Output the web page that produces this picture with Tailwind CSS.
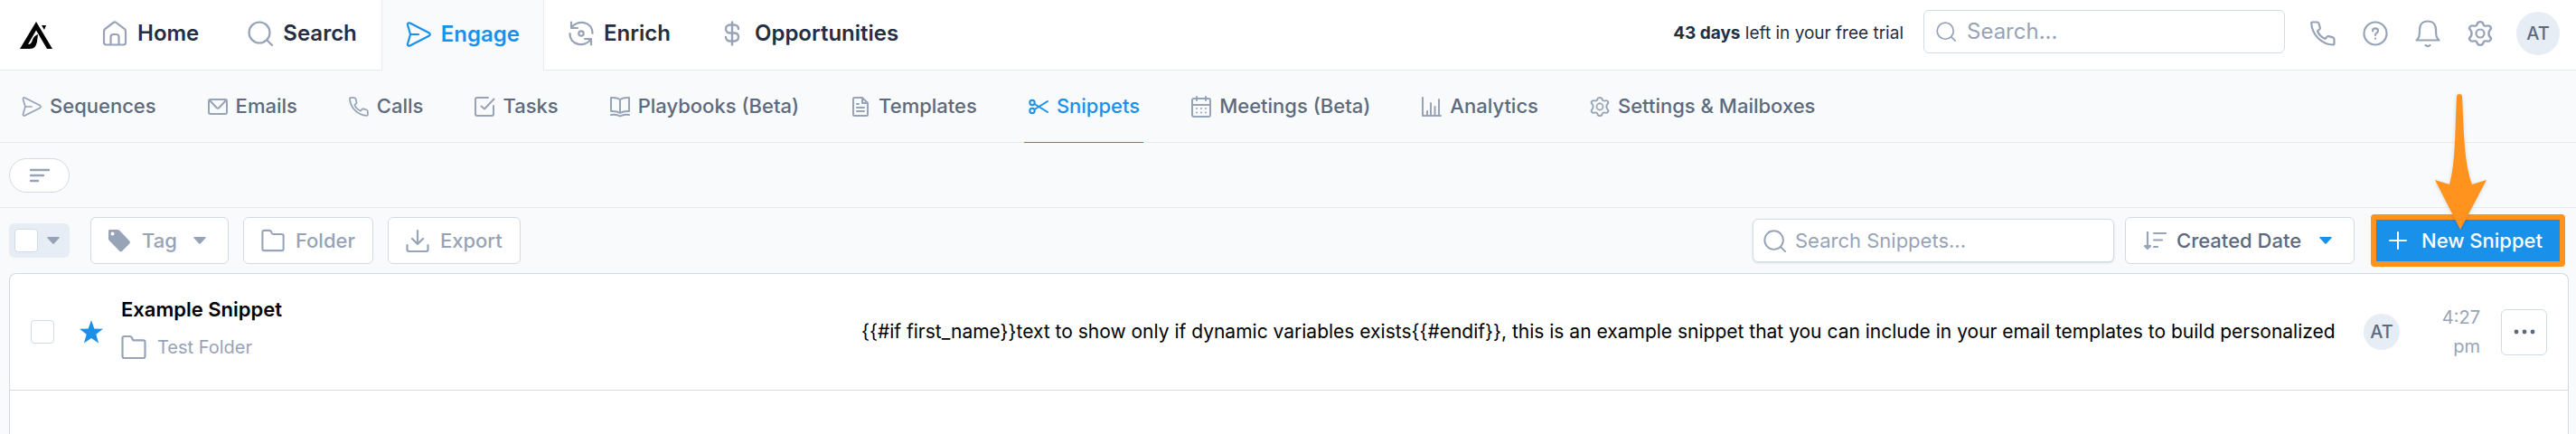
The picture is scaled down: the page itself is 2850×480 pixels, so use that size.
<!DOCTYPE html>
<html lang="en">

<head>
    <meta charset="UTF-8">
    <title>Snippets</title>
    <meta name="viewport" content="width=device-width, initial-scale=1.0">
    <script src="https://cdn.jsdelivr.net/npm/@tailwindcss/browser@4"></script>
</head>

<body class="bg-[#f8fafc] min-h-screen flex flex-col font-['Inter','Liberation_Sans',sans-serif] text-[#242e42]">
    <!-- Shared icons -->
    <svg class="hidden" aria-hidden="true">
        <symbol id="search" viewBox="0 0 28 28" fill="none" stroke="currentColor" stroke-width="2.200" stroke-linecap="round">
            <circle cx="13" cy="13" r="11.5" />
            <path d="M21.5 21.5 27 27" />
        </symbol>
        <symbol id="plane" viewBox="0 0 28 28" fill="none" stroke="currentColor" stroke-width="2.200" stroke-linecap="round" stroke-linejoin="round">
            <path d="M2 3.500c-.4-1.600 1-2.700 2.600-2L25.500 12.200c1.700.9 1.700 2.700 0 3.600L4.600 26.500c-1.600.7-3-.4-2.600-2L5 14zM5 14h9" />
        </symbol>
        <symbol id="phone" viewBox="0 0 28 28" fill="none" stroke="currentColor" stroke-width="2.200" stroke-linecap="round" stroke-linejoin="round">
            <path d="M2 1.500h5.500c1 0 1.800.6 2 1.500l1.300 4.500c.2.800 0 1.500-.6 2L8 11.500c1.500 3.700 4.700 6.800 8.500 8.500l2-2.300c.5-.6 1.300-.8 2-.6l4.500 1.300c.9.3 1.500 1.100 1.500 2v5c0 .7-.6 1.200-1.300 1.100C12.500 26 2 15.500 1.200 2.700c0-.7.200-1.200.8-1.200z" />
        </symbol>
        <symbol id="folder" viewBox="0 0 28 28" fill="none" stroke="currentColor" stroke-width="2.200" stroke-linejoin="round">
            <path d="M1.500 24V4c0-1.200.9-2 2-2h6.200c.8 0 1.500.4 1.900 1.100l1.200 2.400c.3.600.8.900 1.500.9H24.500c1.200 0 2 .8 2 2V24c0 1.200-.8 2-2 2h-21c-1.100 0-2-.8-2-2z" />
        </symbol>
        <symbol id="gear" viewBox="0 0 28 28" fill="none" stroke="currentColor" stroke-width="2.200" stroke-linejoin="round">
            <path transform="translate(-1.960 0) scale(1.140 1)" d="M11 3.800c.7-3.600 5.300-3.600 6 0 .3 1.500 1.800 2.300 3.200 1.800 3.400-1.300 5.700 2.700 3 5-1.200 1.100-1.200 5.700 0 6.800 2.700 2.300.4 6.300-3 5-1.400-.5-2.900.3-3.200 1.800-.7 3.600-5.300 3.600-6 0-.3-1.500-1.800-2.300-3.200-1.800-3.400 1.300-5.700-2.700-3-5 1.200-1.100 1.200-5.700 0-6.800-2.700-2.300-.4-6.300 3-5 1.400.5 2.900-.3 3.200-1.800z" />
            <circle cx="14" cy="14" r="4.500" />
        </symbol>
        <symbol id="caret" viewBox="0 0 14 8">
            <path d="M1 0h12c.8 0 1.100.8.600 1.300L7.700 7.600c-.4.4-1 .4-1.400 0L.4 1.300C-.1.800.2 0 1 0z" fill="currentColor" />
        </symbol>
    </svg>

    <!-- Top bar -->
    <header class="flex items-stretch justify-between h-[78px] bg-white border-b border-[#e7ebf1] pr-[18px]">
        <div class="flex items-stretch">
            <a href="#" aria-label="Apollo" class="flex items-center pl-[22px] pr-7 text-black">
                <svg class="w-9 h-[30px]" viewBox="0 0 36 30" fill="currentColor">
                    <path d="M18 0l18 30h-6L18 9.500 9 25c3 0 4-2 5-5 1-3 3-5 6-6l-1 8c-1 5-3 8-8 8H0z" />
                    <path d="M24 4h5l-2 5z" />
                </svg>
            </a>
            <nav class="flex items-stretch text-2xl font-semibold -mb-px">
                <a href="#" class="flex items-center gap-[11px] px-[26px] pb-[3px] mb-px border-x border-transparent">
                    <svg class="size-7 text-[#97a3b7]" viewBox="0 0 28 28" fill="none" stroke="currentColor" stroke-width="2.200" stroke-linejoin="round">
                        <path d="M2 11.500c0-1 .4-1.800 1.100-2.400L12.500 2c.9-.7 2.100-.7 3 0l9.400 7.100c.7.6 1.100 1.400 1.100 2.400V24c0 1.400-1 2.500-2.400 2.500H4.400C3 26.500 2 25.400 2 24zM9.500 26v-8c0-1.800 1.200-3 3-3h3c1.800 0 3 1.200 3 3v8" />
                    </svg>
                    Home
                </a>
                <a href="#" class="flex items-center gap-[11px] px-[26px] pb-[3px] mb-px border-x border-transparent">
                    <svg class="size-7 text-[#97a3b7]"><use href="#search" /></svg>
                    Search
                </a>
                <a href="#" class="flex items-center gap-[11px] px-[26px] pb-[3px] border-x border-[#e7ebf1] bg-[#f8fafc] text-[#1991eb]">
                    <svg class="size-7"><use href="#plane" /></svg>
                    Engage
                </a>
                <a href="#" class="flex items-center gap-[11px] px-[26px] pb-[3px] mb-px border-x border-transparent">
                    <svg class="size-7 text-[#97a3b7]" viewBox="0 0 28 28" fill="none" stroke="currentColor" stroke-width="2.200" stroke-linecap="round" stroke-linejoin="round">
                        <path d="M3 1.500V8h7M3.500 7.500C9-1.500 26.500 0 26.500 14M25 26.500V20h-7M24.500 20.500C19 29.500 1.500 28 1.500 14" />
                        <circle cx="14" cy="14" r="2.700" />
                    </svg>
                    Enrich
                </a>
                <a href="#" class="flex items-center gap-[11px] px-[26px] pb-[3px] mb-px border-x border-transparent">
                    <svg class="size-7 text-[#97a3b7]" viewBox="0 0 28 28" fill="none" stroke="currentColor" stroke-width="2.400" stroke-linecap="round">
                        <path d="M14 1.500v25M21 9c0-2.800-2-4.500-5-4.500h-4C9 4.500 7 6.300 7 9s2 4.500 5 4.500h4c3 0 5 1.800 5 4.500s-2 4.500-5 4.500h-4c-3 0-5-1.700-5-4.500" />
                    </svg>
                    Opportunities
                </a>
            </nav>
        </div>

        <div class="flex items-center pb-[3px] text-[#97a3b7]">
            <p class="text-[19px] text-[#242e42] mr-[22px]"><b class="font-bold">43 days</b> left in your free trial</p>
            <label class="flex items-center gap-3 w-[400px] h-12 px-[13px] mr-7 mb-1 bg-white border border-[#d1dbe5] rounded-md">
                <svg class="size-[22px]"><use href="#search" /></svg>
                <input type="text" placeholder="Search..." aria-label="Search" class="flex-1 min-w-0 text-2xl text-[#242e42] outline-none placeholder:text-[#97a3b7]">
            </label>
            <div class="flex items-center gap-[30px] mr-[26px]">
                <button type="button" aria-label="Calls" class="size-7"><svg class="size-7"><use href="#phone" /></svg></button>
                <button type="button" aria-label="Help" class="size-7">
                    <svg class="size-7" viewBox="0 0 28 28" fill="none" stroke="currentColor" stroke-width="2.200" stroke-linecap="round">
                        <circle cx="14" cy="14" r="12.500" />
                        <path d="M11 11.300c0-4 6-4 6 0 0 2.200-3 2.200-3 4.700M14 19.500v.2" />
                    </svg>
                </button>
                <button type="button" aria-label="Notifications" class="size-7">
                    <svg class="size-7 overflow-visible" viewBox="0 0 28 28" fill="none" stroke="currentColor" stroke-width="2.200" stroke-linecap="round" stroke-linejoin="round">
                        <path d="M1.500 21.500c3-2.500 3.500-5 3.500-11.500C5 4 8.500.5 14 .5S23 4 23 10c0 6.500.5 9 3.500 11.500zM11.500 27c1.400 1.500 3.600 1.500 5 0" />
                    </svg>
                </button>
                <button type="button" aria-label="Settings" class="size-7"><svg class="size-7"><use href="#gear" /></svg></button>
            </div>
            <button type="button" class="size-12 rounded-full bg-[#e7edf4] text-[#5d6a7e] text-xl font-medium">AT</button>
        </div>
    </header>

    <!-- Engage sections -->
    <nav class="flex items-stretch gap-12 h-20 pl-[19px] border-b border-[#e7ebf1] text-[22px] font-medium text-[#5d6a7e]">
        <a href="#" class="flex items-center gap-2 px-1">
            <svg class="size-6 text-[#97a3b7] p-px"><use href="#plane" /></svg>
            Sequences
        </a>
        <a href="#" class="flex items-center gap-2 px-1">
            <svg class="size-6 text-[#97a3b7]" viewBox="0 0 24 24" fill="none" stroke="currentColor" stroke-width="2" stroke-linejoin="round">
                <rect x="2" y="4" width="20" height="16" rx="2" />
                <path d="m3 5 7.500 8c.8.900 2.200.9 3 0L21 5" />
            </svg>
            Emails
        </a>
        <a href="#" class="flex items-center gap-2 px-1">
            <svg class="size-6 text-[#97a3b7] p-px"><use href="#phone" /></svg>
            Calls
        </a>
        <a href="#" class="flex items-center gap-2 px-1">
            <svg class="size-6 text-[#97a3b7]" viewBox="0 0 24 24" fill="none" stroke="currentColor" stroke-width="2" stroke-linecap="round" stroke-linejoin="round">
                <path d="M16 2H4c-1.200 0-2 .8-2 2v16c0 1.200.8 2 2 2h16c1.200 0 2-.8 2-2v-9M8.500 11.500l3.500 3L22.500 3.500" />
            </svg>
            Tasks
        </a>
        <a href="#" class="flex items-center gap-2 px-1">
            <svg class="size-6 text-[#97a3b7]" viewBox="0 0 24 24" fill="none" stroke="currentColor" stroke-width="2" stroke-linecap="round" stroke-linejoin="round">
                <path d="M12 4C9 2 5 1.800 2 2v15c3-.2 7 0 10 2 3-2 7-2.200 10-2V2c-3-.2-7 0-10 2zM12 4v15M2 21c3.500-.5 7-.3 10 1.500 3-1.800 6.500-2 10-1.500" />
            </svg>
            Playbooks (Beta)
        </a>
        <a href="#" class="flex items-center gap-2 px-1">
            <svg class="size-6 text-[#97a3b7]" viewBox="0 0 24 24" fill="none" stroke="currentColor" stroke-width="2" stroke-linecap="round" stroke-linejoin="round">
                <path d="M4 3.500C4 2.700 4.700 2 5.500 2H14l6 6v12.500c0 .8-.7 1.500-1.500 1.500h-13c-.8 0-1.500-.7-1.500-1.500zM14 2v6h6M8 9h2M8 13h8M8 17h8" />
            </svg>
            Templates
        </a>
        <a href="#" class="flex items-center gap-2 px-1 border-b border-[#1991eb] -mb-px text-[#1991eb]">
            <svg class="size-6" viewBox="0 0 24 24" fill="none" stroke="currentColor" stroke-width="2" stroke-linecap="round">
                <circle cx="5" cy="7.500" r="2.700" />
                <circle cx="5" cy="16.500" r="2.700" />
                <path d="M7.500 9 22 18M7.500 15 22 6" />
            </svg>
            Snippets
        </a>
        <a href="#" class="flex items-center gap-2 px-1">
            <svg class="size-6 text-[#97a3b7]" viewBox="0 0 24 24" fill="none" stroke="currentColor" stroke-width="2" stroke-linecap="round">
                <rect x="2" y="3" width="20" height="20" rx="2" />
                <path d="M7 1v4M17 1v4M2 10h20M7 14v.1M12 14v.1M17 14v.1M7 18.500v.1M12 18.500v.1M17 18.500v.1" />
            </svg>
            Meetings (Beta)
        </a>
        <a href="#" class="flex items-center gap-2 px-1">
            <svg class="size-6 text-[#97a3b7]" viewBox="0 0 24 24" fill="none" stroke="currentColor" stroke-width="2" stroke-linecap="round" stroke-linejoin="round">
                <path d="M2 2v20h20M7 21v-4M11 21V8M15.500 21v-9M20 21V4" />
            </svg>
            Analytics
        </a>
        <a href="#" class="flex items-center gap-2 px-1">
            <svg class="size-6 text-[#97a3b7] p-px"><use href="#gear" /></svg>
            Settings &amp; Mailboxes
        </a>
    </nav>

    <!-- Filters -->
    <div class="flex items-center h-[72px] px-[10px] border-b border-[#e7ebf1]">
        <button type="button" aria-label="Filters" class="flex items-center justify-center w-[67px] h-[38px] bg-white border border-[#d1dbe5] rounded-full text-[#97a3b7]">
            <svg class="w-6 h-4" viewBox="0 0 24 16" fill="none" stroke="currentColor" stroke-width="2.400" stroke-linecap="round">
                <path d="M2 2h20M2 8h14M2 14h8" />
            </svg>
        </button>
    </div>

    <main class="flex-1 flex flex-col px-2 pl-[10px]">
        <!-- Toolbar -->
        <div class="flex items-center justify-between h-[72px] pr-1 text-[22px] font-medium text-[#97a3b7]">
            <div class="flex items-center gap-4">
                <div class="flex items-center gap-[10px] w-[67px] h-[38px] pl-[6px] mr-[7px] rounded-md bg-[#e7edf4]">
                    <input type="checkbox" aria-label="Select all" class="appearance-none size-[26px] rounded-sm bg-white border border-[#d1dbe5]">
                    <button type="button" aria-label="Selection options"><svg class="w-[14px] h-2"><use href="#caret" /></svg></button>
                </div>
                <button type="button" class="flex items-center h-[52px] px-[18px] bg-white border border-[#d1dbe5] rounded-md">
                    <svg class="w-[26px] h-[26px] mr-3" viewBox="0 0 26 26" fill="currentColor">
                        <path fill-rule="evenodd" d="M1 2.500C1 1.700 1.700 1 2.500 1H11c.8 0 1.500.3 2 .8l11.300 11.700c.8.900.8 2.100 0 3l-8.200 8.200c-.8.800-2 .8-2.800 0L1.800 13c-.5-.5-.8-1.200-.8-2zM5.500 7.500a2 2 0 1 0 0-4 2 2 0 0 0 0 4z" />
                    </svg>
                    Tag
                    <svg class="w-[14px] h-2 ml-[18px] mr-[6px]"><use href="#caret" /></svg>
                </button>
                <button type="button" class="flex items-center gap-3 h-[52px] px-[19px] bg-white border border-[#d1dbe5] rounded-md">
                    <svg class="size-[26px]"><use href="#folder" /></svg>
                    Folder
                </button>
                <button type="button" class="flex items-center gap-3 h-[52px] px-[19px] bg-white border border-[#d1dbe5] rounded-md">
                    <svg class="size-[26px]" viewBox="0 0 26 26" fill="none" stroke="currentColor" stroke-width="2.200" stroke-linecap="round" stroke-linejoin="round">
                        <path d="M13 2v15M7 11l6 6 6-6M1.500 18v5c0 1.200.8 2 2 2h19c1.200 0 2-.8 2-2v-5" />
                    </svg>
                    Export
                </button>
            </div>

            <div class="flex items-center">
                <label class="flex items-center gap-[10px] w-[400px] h-12 px-[11px] mr-3 bg-white border border-[#d1dbe5] rounded-md shadow">
                    <svg class="size-[25px]"><use href="#search" /></svg>
                    <input type="text" placeholder="Search Snippets..." aria-label="Search Snippets" class="flex-1 min-w-0 font-normal text-[#242e42] outline-none placeholder:text-[#97a3b7]">
                </label>
                <div class="relative flex items-center h-[52px] w-[254px] mr-[18px] bg-white border border-[#d1dbe5] rounded-md">
                    <svg class="absolute left-5 w-[25px] h-5 pointer-events-none" viewBox="0 0 25 20" fill="none" stroke="currentColor" stroke-width="2.200" stroke-linecap="round" stroke-linejoin="round">
                        <path d="M4 1v16M1 16h6l-3 3zM11 2h13M11 9.500h9M11 17h4" />
                    </svg>
                    <select aria-label="Sort by" class="appearance-none size-full pl-14 text-[#5d6a7e] outline-none">
                        <option>Created Date</option>
                    </select>
                    <svg class="absolute right-6 w-[14px] h-2 text-[#1991eb] pointer-events-none"><use href="#caret" /></svg>
                </div>
                <div class="relative">
                    <button type="button" class="flex items-center gap-4 h-[58px] w-[215px] px-[14px] bg-[#1991eb] border-[6px] border-[#ff931e] rounded-sm text-white whitespace-nowrap">
                        <svg class="size-5 shrink-0" viewBox="0 0 20 20" stroke="currentColor" stroke-width="2" stroke-linecap="round">
                            <path d="M10 1v18M1 10h18" />
                        </svg>
                        New Snippet
                    </button>
                    <!-- Pointer to the button -->
                    <svg class="absolute left-[70px] bottom-10 w-[58px] h-[152px] drop-shadow-sm pointer-events-none" viewBox="0 0 58 152" fill="#ff931e">
                        <path d="M25 4c0-4 6-4 6 0 2 38 2 72 11 97l16-5-29 55L1 96l16 5c7-25 6-59 8-97z" />
                    </svg>
                </div>
            </div>
        </div>

        <!-- Snippet list -->
        <ul class="flex-1 bg-white border border-b-0 border-[#d1dbe5] rounded-t-lg">
            <li class="flex items-center h-[129px] px-[23px] border-b border-[#d1dbe5]">
                <input type="checkbox" aria-label="Select Example Snippet" class="appearance-none size-[26px] mr-7 rounded-sm bg-white border border-[#d1dbe5]">
                <button type="button" aria-label="Starred" class="mr-5">
                    <svg class="size-[26px]" viewBox="0 0 26 26" fill="#1991eb">
                        <path d="m13 0 3.300 9.500 9.700.3-7.700 6 2.800 9.700L13 20l-8.100 5.500 2.800-9.700L0 9.800l9.700-.3z" />
                    </svg>
                </button>
                <div class="w-[819px] pb-[10px]">
                    <a href="#" class="block text-[22px] leading-8 font-semibold text-black">Example Snippet</a>
                    <p class="flex items-center gap-3 mt-3 text-xl leading-7 text-[#97a3b7]">
                        <svg class="size-7"><use href="#folder" /></svg>
                        Test Folder
                    </p>
                </div>
                <p class="flex-1 min-w-0 truncate text-[21px] text-black">{{#if first_name}}text to show only if dynamic variables exists{{#endif}}, this is an example snippet that you can include in your email templates to build personalized</p>
                <span class="flex items-center justify-center size-10 rounded-full bg-[#e7edf4] text-[#5d6a7e] text-xl font-medium">AT</span>
                <time class="w-[66px] mx-[23px] text-right text-xl leading-8 text-[#97a3b7]">4:27<br>pm</time>
                <button type="button" aria-label="More actions" class="flex items-center justify-center size-[51px] border border-[#d1dbe5] rounded-md text-[#5d6a7e]">
                    <svg class="w-6 h-[6px]" viewBox="0 0 24 6" fill="currentColor">
                        <circle cx="3" cy="3" r="2.400" />
                        <circle cx="12" cy="3" r="2.400" />
                        <circle cx="21" cy="3" r="2.400" />
                    </svg>
                </button>
            </li>
        </ul>
    </main>
</body>

</html>
